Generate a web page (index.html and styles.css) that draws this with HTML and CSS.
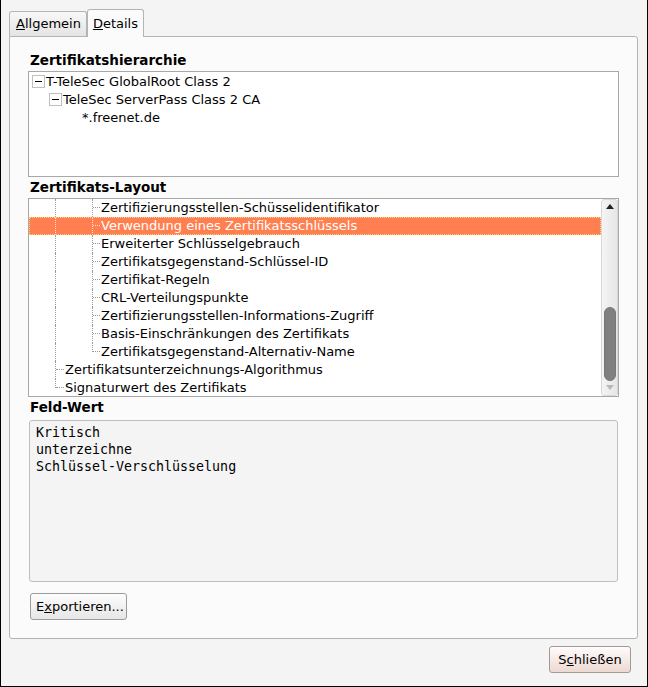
FILE: index.html
```html
<!DOCTYPE html>
<html lang="de">
<head>
<meta charset="utf-8">
<title>Zertifikat-Betrachter</title>
<link rel="stylesheet" href="styles.css">
</head>
<body>
<div class="window">
  <div class="tabs">
    <div class="tab"><span class="ul">A</span>llgemein</div>
    <div class="tab active"><span class="ul">D</span>etails</div>
  </div>
  <div class="panel">
    <div class="heading">Zertifikatshierarchie</div>
    <div class="box hier">
      <div class="hrow lvl1"><span class="exp"></span><span class="txt">T-TeleSec GlobalRoot Class 2</span></div>
      <div class="hrow lvl2"><span class="exp"></span><span class="txt">TeleSec ServerPass Class 2 CA</span></div>
      <div class="hrow lvl3"><span class="txt">*.freenet.de</span></div>
    </div>

    <div class="heading h2">Zertifikats-Layout</div>
    <div class="box layout">
      <div class="rows">
        <div class="row l3"><span class="g0"></span><span class="g1"></span><span class="br"></span><span class="txt">Zertifizierungsstellen-Schüsselidentifikator</span></div>
        <div class="row l3 sel"><span class="g0"></span><span class="g1"></span><span class="br"></span><span class="txt">Verwendung eines Zertifikatsschlüssels</span></div>
        <div class="row l3"><span class="g0"></span><span class="g1"></span><span class="br"></span><span class="txt">Erweiterter Schlüsselgebrauch</span></div>
        <div class="row l3"><span class="g0"></span><span class="g1"></span><span class="br"></span><span class="txt">Zertifikatsgegenstand-Schlüssel-ID</span></div>
        <div class="row l3"><span class="g0"></span><span class="g1"></span><span class="br"></span><span class="txt">Zertifikat-Regeln</span></div>
        <div class="row l3"><span class="g0"></span><span class="g1"></span><span class="br"></span><span class="txt">CRL-Verteilungspunkte</span></div>
        <div class="row l3"><span class="g0"></span><span class="g1"></span><span class="br"></span><span class="txt">Zertifizierungsstellen-Informations-Zugriff</span></div>
        <div class="row l3"><span class="g0"></span><span class="g1"></span><span class="br"></span><span class="txt">Basis-Einschränkungen des Zertifikats</span></div>
        <div class="row l3"><span class="g0"></span><span class="g1"></span><span class="br last"></span><span class="txt">Zertifikatsgegenstand-Alternativ-Name</span></div>
        <div class="row l2"><span class="g0"></span><span class="br2"></span><span class="txt">Zertifikatsunterzeichnungs-Algorithmus</span></div>
        <div class="row l2"><span class="g0"></span><span class="br2 last"></span><span class="txt">Signaturwert des Zertifikats</span></div>
      </div>
      <div class="scrollbar">
        <div class="arrow up"></div>
        <div class="track"><div class="thumb"></div></div>
        <div class="arrow down"></div>
      </div>
    </div>

    <div class="heading h3">Feld-Wert</div>
    <div class="value">Kritisch
unterzeichne
Schlüssel-Verschlüsselung</div>

    <div class="btnrow">
      <button class="btn export">E<span class="ul">x</span>portieren...</button>
    </div>
  </div>
  <div class="footer">
    <button class="btn close">S<span class="ul">c</span>hließen</button>
  </div>
</div>
</body>
</html>
```

FILE: styles.css
```css
* { box-sizing: border-box; }
html, body { margin: 0; padding: 0; }
body {
  font-family: "DejaVu Sans", Verdana, sans-serif;
  font-size: 13px;
  color: #000;
  background: #f4f4f4;
}
.window {
  width: 648px;
  height: 687px;
  background: #f4f4f4;
  border-left: 1px solid #000;
  border-right: 1px solid #000;
  border-bottom: 1px solid #000;
  display: flex;
  flex-direction: column;
}
.ul { text-decoration: underline; }

.tabs {
  display: flex;
  align-items: flex-end;
  padding-left: 8px;
  margin-top: 9px;
  position: relative;
  z-index: 1;
}
.tab {
  height: 25px;
  padding: 0 5px 0 6px;
  border: 1px solid #b4b4b4;
  border-bottom: none;
  border-radius: 3px 3px 0 0;
  background: linear-gradient(#f8f8f8, #e4e4e4);
  line-height: 24px;
  margin-bottom: 0;
}
.tab.active {
  height: 28px;
  background: #fbfbfb;
  margin-bottom: -1px;
  line-height: 28px;
  padding: 0 5px 0 5px;
}

.panel {
  margin: 0 9px 0 8px;
  height: 603px;
  border: 1px solid #b4b4b4;
  border-radius: 0 3px 3px 3px;
  background: #fbfbfb;
  padding: 14px 18px 0 18px;
}
.heading {
  font-weight: bold;
  font-size: 13.5px;
  height: 20px;
  line-height: 18px;
  padding-left: 2px;
}
.h2 { height: 21px; line-height: 20px; }
.h3 { height: 23px; line-height: 20px; }

.box {
  border: 1px solid #a8a8a8;
  background: #fff;
}
.hier {
  height: 106px;
  padding-top: 0;
}
.hrow {
  height: 18px;
  display: flex;
  align-items: center;
  white-space: nowrap;
}
.hrow.lvl1 { padding-left: 3px; }
.hrow.lvl2 { padding-left: 20px; }
.hrow.lvl3 { padding-left: 53px; }
.exp {
  width: 13px;
  height: 13px;
  border: 1px solid #c0c0c0;
  position: relative;
  flex: none;
  margin-right: 1px;
}
.exp::after {
  content: "";
  position: absolute;
  left: 2px;
  right: 2px;
  top: 5px;
  height: 1px;
  background: #000;
}

.layout {
  height: 199px;
  display: flex;
}
.rows { flex: 1; }
.row {
  height: 18px;
  display: flex;
  align-items: stretch;
  white-space: nowrap;
  line-height: 18px;
}
.row.sel {
  background: #ff7f50;
  color: #fff;
  outline: 1px dotted #ffd27a;
  outline-offset: -1px;
}
.g0 { width: 26px; flex: none; }
.g1 {
  width: 37px;
  flex: none;
  position: relative;
}
.g1::before, .br::before, .br2::before {
  content: "";
  position: absolute;
  left: 0;
  top: 0;
  bottom: 0;
  border-left: 1px dotted #9a9a9a;
}
.br, .br2 {
  flex: none;
  position: relative;
  margin-right: 1px;
}
.br { width: 8px; }
.br2 { width: 9px; margin-left: 0; }
.br::after, .br2::after {
  content: "";
  position: absolute;
  left: 1px;
  right: 0;
  top: 8px;
  border-top: 1px dotted #9a9a9a;
}
.br.last::before, .br2.last::before { bottom: 9px; }
.sel .g1::before, .sel .br::before, .sel .br::after { border-color: #ffe0d0; }

.scrollbar {
  width: 17px;
  flex: none;
  border-radius: 3px;
  background: linear-gradient(to right, #f4f4f4, #e6e6e6);
  border: 1px solid #d8d8d8;
  display: flex;
  flex-direction: column;
  align-items: center;
}
.arrow {
  height: 14px;
  width: 100%;
  position: relative;
  flex: none;
}
.arrow::after {
  content: "";
  position: absolute;
  left: 4px;
  top: 5px;
  border-left: 4px solid transparent;
  border-right: 4px solid transparent;
}
.arrow.up::after { border-bottom: 5px solid #222; top: 4px; }
.arrow.down::after { border-top: 5px solid #b8b8b8; top: 4px; }
.track {
  flex: 1;
  width: 100%;
  display: flex;
  flex-direction: column;
  justify-content: flex-end;
  align-items: center;
  padding-bottom: 0;
}
.thumb {
  width: 12px;
  height: 74px;
  border-radius: 6px;
  background: #808080;
  border: 1px solid #777;
}

.value {
  height: 162px;
  margin-left: 1px;
  margin-right: 1px;
  border: 1px solid #bebebe;
  border-radius: 3px;
  background: #f4f4f4;
  font-family: "DejaVu Sans Mono", monospace;
  font-size: 13.3px;
  line-height: 17px;
  white-space: pre;
  padding: 3px 6px;
}

.btnrow { padding-top: 11px; padding-left: 2px; }
.btn {
  font-family: "DejaVu Sans", Verdana, sans-serif;
  font-size: 13px;
  color: #000;
  height: 27px;
  border: 1px solid #9c9c9c;
  border-radius: 3px;
  background: linear-gradient(#fdfdfd, #e6e6e6);
  padding: 0 5px;
  margin: 0;
}
.export { width: 97px; }
.footer {
  display: flex;
  justify-content: flex-end;
  padding: 7px 16px 0 0;
}
.close {
  width: 82px;
  border-color: #a69894;
  background: linear-gradient(#fefcfc, #eed8d2);
}
```
